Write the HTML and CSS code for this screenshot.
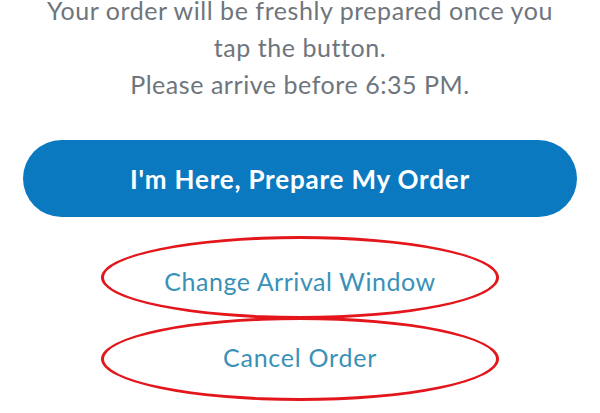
FILE: index.html
```html
<!DOCTYPE html>
<html>
<head>
<meta charset="utf-8">
<link rel="stylesheet" href="styles.css">
</head>
<body>
<main class="page">
  <div class="info">
    <p class="line"><span class="first">Your order will be freshly prepared once you</span><span class="rest">tap the button.</span></p>
    <p class="line">Please arrive before 6:35 PM.</p>
  </div>
  <button class="primary">I'm Here, Prepare My Order</button>
  <div class="links">
    <a class="link link-change">Change Arrival Window</a>
    <a class="link link-cancel">Cancel Order</a>
  </div>
</main>
</body>
</html>
```
FILE: styles.css
```css
html, body {
  margin: 0;
  padding: 0;
  background: #ffffff;
  overflow: hidden;
}
.page {
  width: 600px;
  height: 413px;
  display: flex;
  flex-direction: column;
  align-items: center;
  font-family: Lato, "Noto Sans", sans-serif;
}
.info {
  text-align: center;
  color: #6e757c;
  font-size: 25px;
  line-height: 36.5px;
  letter-spacing: 0.55px;
}
.line {
  margin: 0;
}
.first {
  display: block;
  line-height: 21px;
}
.rest {
  display: block;
  margin-top: 8px;
}
.primary {
  margin-top: 38px;
  width: 554px;
  height: 77px;
  border: none;
  border-radius: 39px;
  background: #0b79c0;
  color: #ffffff;
  font-family: Lato, "Noto Sans", sans-serif;
  font-weight: 700;
  font-size: 26px;
  letter-spacing: 0.8px;
  padding: 0;
}
.links {
  margin-top: 19px;
  display: flex;
  flex-direction: column;
  align-items: center;
}
.link {
  box-sizing: border-box;
  width: 398px;
  border: 3px solid #e3161b;
  border-radius: 50%;
  display: flex;
  align-items: center;
  justify-content: center;
  color: #3a91b7;
  font-size: 25px;
  letter-spacing: 0.55px;
}
.link-change {
  height: 83px;
  padding-top: 6px;
}
.link-cancel {
  height: 84px;
  margin-top: -2px;
  padding-bottom: 4px;
  letter-spacing: 0.75px;
}
```
